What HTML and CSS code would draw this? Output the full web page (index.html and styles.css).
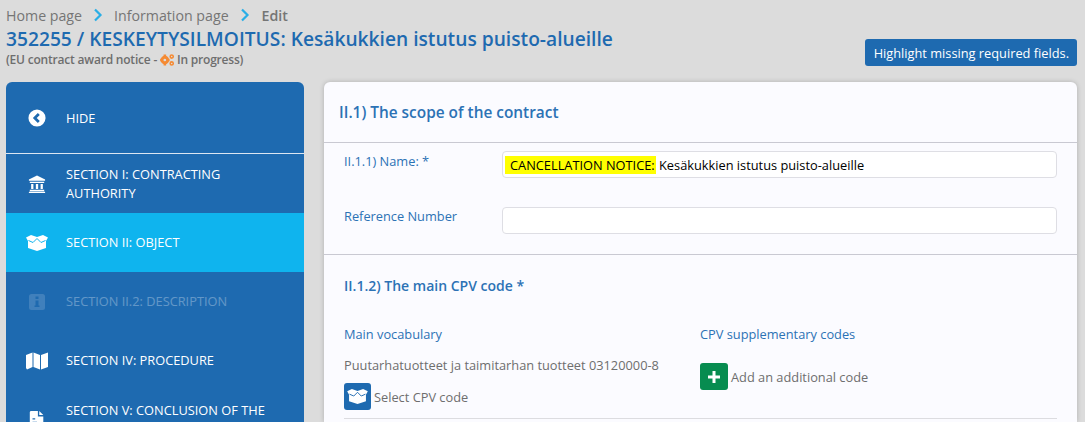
FILE: index.html
```html
<!DOCTYPE html>
<html lang="en">
<head>
    <meta charset="UTF-8">
    <meta name="viewport" content="width=device-width, initial-scale=1.0">
    <title>Edit notice</title>
    <link rel="stylesheet" href="styles.css">
</head>
<body>
    <header class="top">
        <div class="top-left">
            <nav class="crumbs">
                <span>Home page</span>
                <svg class="chev" viewBox="0 0 10 14"><path d="M2 1.500 7.500 7 2 12.500" /></svg>
                <span>Information page</span>
                <svg class="chev" viewBox="0 0 10 14"><path d="M2 1.500 7.500 7 2 12.500" /></svg>
                <b>Edit</b>
            </nav>
            <h1>352255 / KESKEYTYSILMOITUS: Kesäkukkien istutus puisto-alueille</h1>
            <p class="status">(EU contract award notice -
                <svg class="cogs" viewBox="0 0 16 14">
                    <circle cx="5.500" cy="7" r="3.300" fill="none" stroke="#f58a33" stroke-width="3.400" />
                    <path d="M4 .5h3v2H4zM4 11.500h3v2H4zM0 5.500h2v3H0zM9 5.500h2v3H9z" fill="#f58a33" />
                    <circle cx="13.500" cy="3" r="1.800" fill="none" stroke="#f58a33" stroke-width="1.800" />
                    <circle cx="13.500" cy="11" r="1.800" fill="none" stroke="#f58a33" stroke-width="1.800" />
                </svg>
                In progress)</p>
        </div>
        <button class="highlight">Highlight missing required fields.</button>
    </header>

    <div class="main">
        <aside class="side">
            <div class="side-item hide-item">
                <svg class="ico" viewBox="0 0 20 20"><circle cx="10" cy="10" r="9.500" fill="#fff" /><path d="M12 5.500 7.500 10l4.500 4.500" fill="none" stroke="#1e6ab0" stroke-width="3" /></svg>
                <span>HIDE</span>
            </div>
            <div class="side-item">
                <svg class="ico" viewBox="0 0 20 20" fill="#fff"><path d="M10 .5 19 5v1.500H1V5zM2 7.500h16V9H2zM3.500 10h2.500v5.500H3.500zM8.700 10h2.600v5.500H8.700zM14 10h2.500v5.500H14zM2 16.500h16V18H2zM1 18.500h18V20H1z" /></svg>
                <span>SECTION I: CONTRACTING AUTHORITY</span>
            </div>
            <div class="side-item active">
                <svg class="ico box" viewBox="0 0 22 16"><path d="M0 2.500 5 0 11 2 17 0 22 2.500 20 6V13L11 16 2 13V6z" fill="#fff" /><path d="M2.500 5.500 7 7.500 11 3.500 15 7.500 19.500 5.500" fill="none" stroke="currentColor" /></svg>
                <span>SECTION II: OBJECT</span>
            </div>
            <div class="side-item disabled">
                <svg class="ico info" viewBox="0 0 18 18"><rect x="1" y="1" width="16" height="16" rx="2.500" fill="#fff" /><path d="M7.500 3.500h3V6h-3zM7.500 7.500h3v5h1V14h-5v-1.500h1z" fill="#1e6ab0" /></svg>
                <span>SECTION II.2: DESCRIPTION</span>
            </div>
            <div class="side-item">
                <svg class="ico" viewBox="0 0 22 18" fill="#fff"><path d="M0 3 6.500 .5V15L1 17.500 0 16zM7.500 .5 14 3V17.500L7.500 15zM15 3 22 .5V15L15 17.500z" /></svg>
                <span>SECTION IV: PROCEDURE</span>
            </div>
            <div class="side-item">
                <svg class="ico" viewBox="0 0 16 20" fill="#fff"><path d="M1.500 0H9v6h6v12.500a1.500 1.500 0 0 1-1.500 1.500h-12A1.500 1.500 0 0 1 0 18.500v-17A1.500 1.500 0 0 1 1.500 0zM10.500 0 15 4.500h-4.500zM3 8v1.500h3V8zM3 12v1.500h5V12z" fill-rule="evenodd" /></svg>
                <span>SECTION V: CONCLUSION OF THE CONTRACT</span>
            </div>
        </aside>

        <section class="panel">
            <h2 class="panel-head">II.1) The scope of the contract</h2>

            <div class="form-block">
                <div class="form-row">
                    <label>II.1.1) Name: *</label>
                    <div class="field"><mark>CANCELLATION NOTICE:</mark> Kesäkukkien istutus puisto-alueille</div>
                </div>
                <div class="form-row">
                    <label class="ref-label">Reference Number</label>
                    <div class="field"></div>
                </div>
            </div>

            <div class="cpv">
                <h3>II.1.2) The main CPV code *</h3>
                <div class="cpv-cols">
                    <div class="cpv-col">
                        <div class="col-title">Main vocabulary</div>
                        <div class="cpv-value">Puutarhatuotteet ja taimitarhan tuotteet 03120000-8</div>
                        <div class="action">
                            <span class="square blue">
                                <svg viewBox="0 0 22 16"><path d="M0 2.500 5 0 11 2 17 0 22 2.500 20 6V13L11 16 2 13V6z" fill="#fff" /><path d="M2.500 5.500 7 7.500 11 3.500 15 7.500 19.500 5.500" fill="none" stroke="currentColor" /></svg>
                            </span>
                            Select CPV code
                        </div>
                    </div>
                    <div class="cpv-col">
                        <div class="col-title">CPV supplementary codes</div>
                        <div class="action add">
                            <span class="square green">
                                <svg viewBox="0 0 14 14"><path d="M5.500 1h3v4.500H13v3H8.500V13h-3V8.500H1v-3h4.500z" fill="#fff" /></svg>
                            </span>
                            Add an additional code
                        </div>
                    </div>
                </div>
                <hr class="rule">
            </div>
        </section>
    </div>
</body>
</html>
```

FILE: styles.css
```css
html, body {
    height: 422px;
    overflow: hidden;
}
body {
    margin: 0;
    background-color: #dcdcdc;
    font-family: "Open Sans", sans-serif;
    font-size: 12.8px;
    color: #6e6e6e;
}
.top {
    display: flex;
    justify-content: space-between;
    align-items: flex-start;
    height: 82px;
    padding: 0 8px 0 6px;
    box-sizing: border-box;
}
.crumbs {
    display: flex;
    align-items: center;
    gap: 11px;
    height: 20px;
    margin-top: 5px;
    font-size: 14.2px;
    color: #757575;
}
.crumbs b {
    margin-left: 1px;
    font-weight: 600;
}
.chev {
    width: 10px;
    height: 14px;
    fill: none;
    stroke: #29aee6;
    stroke-width: 2.2;
}
h1 {
    margin: 0;
    font-size: 19.2px;
    font-weight: 600;
    line-height: 27px;
    color: #1e6ab0;
}
.status {
    margin: 0;
    padding-top: 1px;
    font-size: 12px;
    font-weight: 600;
    line-height: 14px;
    letter-spacing: -0.2px;
}
.cogs {
    width: 14px;
    height: 12px;
    vertical-align: -2px;
}
.highlight {
    margin-top: 39px;
    height: 27px;
    padding: 0 8px 0 9px;
    border: 0;
    border-radius: 3px;
    background-color: #1e6ab0;
    color: #fff;
    font-family: inherit;
    font-size: 12.8px;
}
.main {
    display: flex;
    gap: 20px;
    padding: 0 8px 0 6px;
}
.side {
    flex: none;
    width: 298px;
    height: 340px;
    border-radius: 6px 6px 0 0;
    background-color: #1e6ab0;
    overflow: hidden;
}
.side-item {
    display: flex;
    align-items: center;
    gap: 18px;
    height: 59px;
    padding: 0 20px;
    color: #fff;
    line-height: 19px;
}
.side-item span {
    width: 200px;
}
.hide-item {
    height: 71px;
    border-bottom: 1px solid #dce6f2;
}
.hide-item span {
    padding-top: 2px;
}
.ico {
    flex: none;
    width: 22px;
    height: 18px;
}
.active {
    background-color: #0fb4ee;
}
.box {
    color: #0fb4ee;
}
.disabled span {
    opacity: 0.3;
}
.disabled .ico {
    opacity: 0.15;
}
.panel {
    flex: 1;
    height: 340px;
    border-radius: 6px 6px 0 0;
    background-color: #fbfbff;
    box-shadow: 0 0 5px rgba(0, 0, 0, 0.2);
}
.panel-head {
    margin: 0;
    height: 59px;
    padding: 1px 0 0 15px;
    border-bottom: 1px solid #c9c9d2;
    font-size: 15.4px;
    font-weight: 600;
    line-height: 60px;
    color: #2c72b5;
}
.form-block {
    height: 103px;
    padding: 8px 20px 0;
    border-bottom: 1px solid #c9c9d2;
}
.form-row {
    display: flex;
    height: 56px;
}
.form-row label {
    width: 158px;
    line-height: 20px;
    color: #2c72b5;
}
.form-row .ref-label {
    line-height: 18px;
}
.field {
    flex: 1;
    height: 27px;
    box-sizing: border-box;
    padding: 3px 2px;
    border: 1px solid #dedee4;
    border-radius: 4px;
    background-color: #fff;
    color: #000;
    line-height: 20px;
}
mark {
    padding: 0 1px 0 5px;
    background-color: #ffff00;
}
.cpv {
    padding: 0 20px;
}
.cpv h3 {
    margin: 0;
    padding-top: 21px;
    font-size: 14px;
    font-weight: 600;
    line-height: 20px;
    color: #2c72b5;
}
.cpv-cols {
    display: flex;
    margin-top: 28px;
}
.cpv-col {
    width: 356px;
}
.col-title {
    line-height: 20px;
    color: #2c72b5;
}
.cpv-value {
    margin-top: 11px;
    line-height: 20px;
}
.action {
    display: flex;
    align-items: center;
    gap: 3px;
    margin-top: 8px;
}
.add {
    margin-top: 19px;
}
.square {
    display: flex;
    align-items: center;
    justify-content: center;
    width: 27px;
    height: 27px;
    border-radius: 3px;
}
.blue {
    background-color: #1e6ab0;
    color: #1e6ab0;
}
.blue svg {
    width: 21px;
    height: 15px;
}
.green {
    width: 28px;
    background-color: #078c50;
}
.green svg {
    width: 14px;
    height: 14px;
}
.rule {
    margin: 8px 0 0;
    border: 0;
    border-top: 1px solid #dcdce0;
}
```
